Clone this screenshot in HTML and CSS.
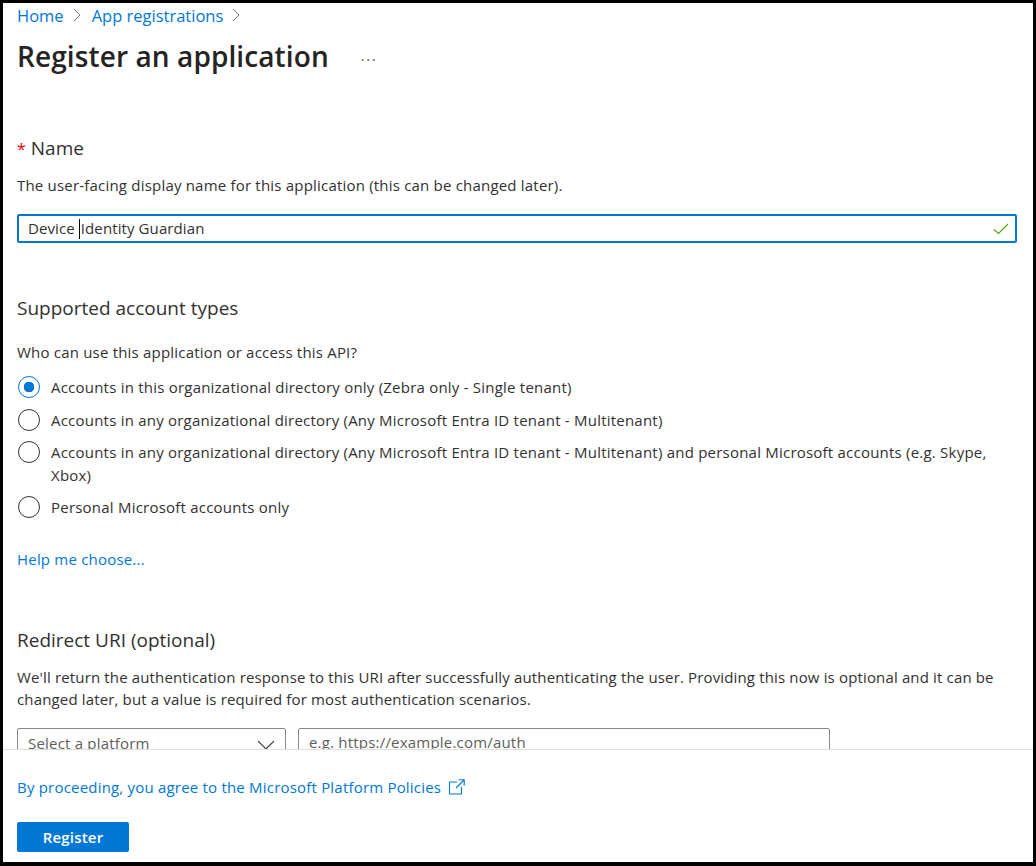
FILE: index.html
```html
<!DOCTYPE html>
<html lang="en">
<head>
    <meta charset="UTF-8">
    <meta name="viewport" content="width=device-width, initial-scale=1.0">
    <title>Register an application</title>
    <link rel="stylesheet" href="styles.css">
</head>
<body>
    <div class="frame">
        <div class="content">
            <nav class="breadcrumb">
                <a href="#">Home</a>
                <svg class="crumb-chevron" width="8" height="14" viewBox="0 0 8 14"><path d="M1 1l6 6-6 6" fill="none" stroke="#767676"/></svg>
                <a href="#">App registrations</a>
                <svg class="crumb-chevron" width="8" height="14" viewBox="0 0 8 14"><path d="M1 1l6 6-6 6" fill="none" stroke="#767676"/></svg>
            </nav>
            <div class="title-row">
                <h1>Register an application</h1>
                <span class="more">...</span>
            </div>

            <h2 class="field-title name-title"><span class="required">*</span>Name</h2>
            <p class="description name-description">The user-facing display name for this application (this can be changed later).</p>
            <div class="name-input">
                <span class="name-value">Device <span class="caret"></span>Identity Guardian</span>
                <svg width="16" height="12" viewBox="0 0 16 12"><path d="M1 6.5l4.5 4L15 1" fill="none" stroke="#57a300" stroke-width="1.2"/></svg>
            </div>

            <h2 class="field-title accounts-title">Supported account types</h2>
            <p class="description who-label">Who can use this application or access this API?</p>
            <div class="radio-list">
                <label class="radio-row">
                    <span class="radio selected"></span>
                    <span>Accounts in this organizational directory only (Zebra only - Single tenant)</span>
                </label>
                <label class="radio-row">
                    <span class="radio"></span>
                    <span>Accounts in any organizational directory (Any Microsoft Entra ID tenant - Multitenant)</span>
                </label>
                <label class="radio-row">
                    <span class="radio"></span>
                    <span>Accounts in any organizational directory (Any Microsoft Entra ID tenant - Multitenant) and personal Microsoft accounts (e.g. Skype, Xbox)</span>
                </label>
                <label class="radio-row">
                    <span class="radio"></span>
                    <span>Personal Microsoft accounts only</span>
                </label>
            </div>
            <a class="help-link" href="#">Help me choose...</a>

            <h2 class="field-title redirect-title">Redirect URI (optional)</h2>
            <p class="description redirect-description">We'll return the authentication response to this URI after successfully authenticating the user. Providing this now is optional and it can be changed later, but a value is required for most authentication scenarios.</p>
            <div class="redirect-row">
                <div class="platform-select">
                    <span>Select a platform</span>
                    <svg width="18" height="10" viewBox="0 0 18 10"><path d="M1 1l8 8 8-8" fill="none" stroke="#444" stroke-width="1.1"/></svg>
                </div>
                <div class="uri-input">e.g. https://example.com/auth</div>
            </div>
        </div>

        <div class="footer">
            <a class="policy-link" href="#">
                By proceeding, you agree to the Microsoft Platform Policies
                <svg width="17" height="16" viewBox="0 0 17 16"><path d="M9 3H1.5v12h12V8M8 9l8-8M10.5 .8h5.7v5.7" fill="none" stroke="#0078d4" stroke-width="1.1"/></svg>
            </a>
            <button class="register-button">Register</button>
        </div>
    </div>
</body>
</html>
```

FILE: styles.css
```css
* {
    box-sizing: border-box;
}
body {
    margin: 0;
    background-color: #fff;
    font-family: "Open Sans", "Noto Sans", Arial, sans-serif;
    color: #323130;
}
a {
    color: #0078d4;
    text-decoration: none;
}
.frame {
    width: 1036px;
    height: 866px;
    display: flex;
    flex-direction: column;
    border: 3px solid #000;
    border-bottom-width: 4px;
    overflow: hidden;
}
.content {
    height: 746px;
    padding: 0 16px 0 14px;
    overflow: hidden;
}
.breadcrumb {
    display: flex;
    align-items: center;
    height: 24px;
    font-size: 16.5px;
}
.crumb-chevron {
    margin: 0 11px 0 9px;
}
.title-row {
    display: flex;
    align-items: center;
    height: 44px;
    margin-top: 7px;
}
h1 {
    margin: 0;
    font-size: 28px;
    font-weight: 600;
    letter-spacing: 0.1px;
    color: #252423;
}
.more {
    margin: 0 0 3px 32px;
    font-size: 15px;
    line-height: 14px;
    color: #605e5c;
    letter-spacing: 1.5px;
}
.field-title {
    margin: 0;
    font-size: 19px;
    line-height: 24px;
    font-weight: 400;
}
.required {
    color: #e00000;
    font-size: 16px;
    margin-right: 5px;
}
.description, .radio-row, .help-link, .policy-link, .redirect-row {
    font-size: 15px;
    letter-spacing: 0.2px;
}
.description {
    margin: 0;
    line-height: 22px;
}
.name-title {
    margin-top: 58px;
}
.name-description {
    margin-top: 13px;
}
.name-input {
    display: flex;
    align-items: center;
    justify-content: space-between;
    height: 29px;
    margin-top: 18px;
    padding: 0 6px 0 9px;
    border: 2px solid #0078d4;
    border-radius: 2px;
    font-size: 15px;
    letter-spacing: 0.1px;
}
.caret {
    display: inline-block;
    width: 1px;
    height: 20px;
    margin-right: 1px;
    vertical-align: -5px;
    background-color: #000;
}
.accounts-title {
    margin-top: 53px;
}
.who-label {
    margin-top: 21px;
}
.radio-list {
    margin-top: 13.3px;
}
.radio-row {
    display: flex;
    gap: 11px;
    line-height: 23px;
    margin-bottom: 9.3px;
    letter-spacing: 0.22px;
}
.radio {
    flex: none;
    width: 22px;
    height: 22px;
    margin-left: 1px;
    border: 1px solid #323130;
    border-radius: 50%;
}
.radio.selected {
    border-color: #0078d4;
    background: radial-gradient(circle, #0078d4 0 5px, #fff 5.6px);
}
.help-link {
    display: block;
    margin-top: 28.5px;
    line-height: 22px;
}
.redirect-title {
    margin-top: 58px;
}
.redirect-description {
    margin-top: 14px;
    letter-spacing: 0.15px;
}
.redirect-row {
    display: flex;
    gap: 12px;
    margin-top: 18px;
    color: #605e5c;
}
.platform-select, .uri-input {
    height: 32px;
    border: 1px solid #8a8886;
    border-radius: 2px;
    padding: 3px 10px;
}
.platform-select {
    display: flex;
    justify-content: space-between;
    width: 269px;
    padding-top: 4px;
}
.platform-select svg {
    margin-top: 7px;
}
.uri-input {
    width: 532px;
}
.footer {
    flex: 1;
    padding: 0 14px;
    border-top: 1px solid #e1dfdd;
}
.policy-link {
    display: flex;
    align-items: center;
    gap: 7px;
    margin-top: 26px;
    line-height: 22px;
}
.register-button {
    display: block;
    width: 112px;
    height: 30px;
    margin-top: 24px;
    border: none;
    border-radius: 2px;
    background-color: #0078d4;
    color: #fff;
    font-family: inherit;
    font-size: 15px;
    font-weight: 600;
    letter-spacing: 0.2px;
}
```
